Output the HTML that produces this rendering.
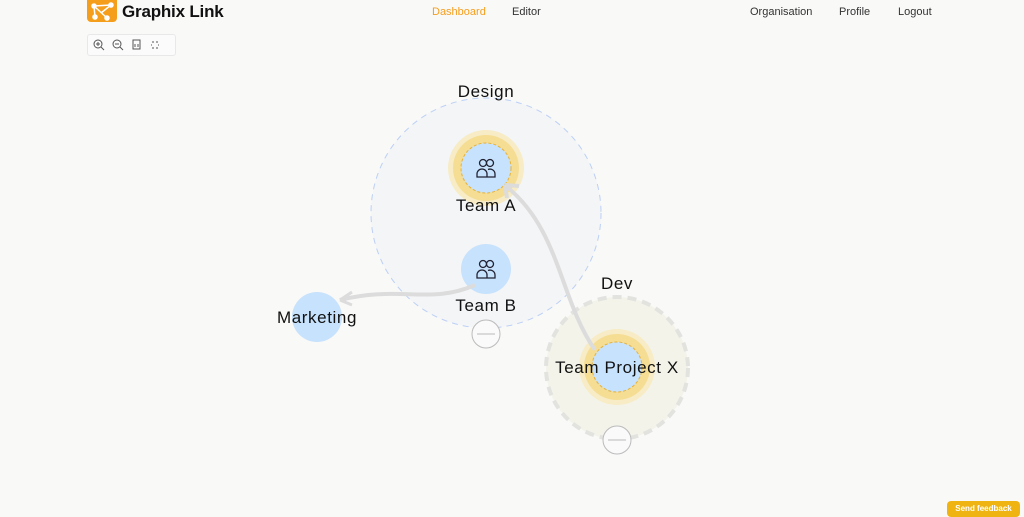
<!DOCTYPE html>
<html><head><meta charset="utf-8"><style>
body{margin:0;width:1024px;height:512px;background:#f9f9f8;font-family:"Liberation Sans",sans-serif;overflow:hidden;position:relative}
.nav{position:absolute;top:5px;font-size:11px;color:#333}
</style></head><body>
<div style="position:absolute;left:87px;top:0;width:30px;height:22px;background:#f59e1b;border-radius:0 0 4px 4px"></div>
<svg style="position:absolute;left:87px;top:0" width="30" height="22"><g stroke="#fff" stroke-width="1.5" fill="#fff"><line x1="7" y1="6" x2="24" y2="5"/><line x1="7" y1="6" x2="20" y2="18"/><line x1="7" y1="6" x2="8" y2="17"/><line x1="24" y1="5" x2="14" y2="13"/><circle cx="7" cy="6" r="2"/><circle cx="24" cy="5" r="2"/><circle cx="20" cy="18" r="2"/><circle cx="8" cy="17" r="2"/></g></svg>
<div style="position:absolute;left:122px;top:2px;font-size:17px;font-weight:bold;color:#111;letter-spacing:-0.2px">Graphix Link</div>
<div class="nav" style="left:432px;top:6px;color:#f59e1b">Dashboard</div>
<div class="nav" style="left:512px;top:6px">Editor</div>
<div class="nav" style="left:750px;top:6px">Organisation</div>
<div class="nav" style="left:839px;top:6px">Profile</div>
<div class="nav" style="left:898px;top:6px">Logout</div>
<div style="position:absolute;left:87px;top:34px;width:87px;height:20px;border:1px solid #e8e8e8;border-radius:3px;background:#fbfbfb"></div>
<svg style="position:absolute;left:87px;top:34px" width="90" height="22" fill="none" stroke="#555" stroke-width="1"><circle cx="11" cy="10" r="4"/><line x1="14" y1="13" x2="17" y2="16"/><line x1="9" y1="10" x2="13" y2="10"/><line x1="11" y1="8" x2="11" y2="12"/><circle cx="30" cy="10" r="4"/><line x1="33" y1="13" x2="36" y2="16"/><line x1="28" y1="10" x2="32" y2="10"/><rect x="46" y="6" width="7" height="9"/><line x1="48" y1="10" x2="48" y2="13"/><line x1="51" y1="10" x2="51" y2="13"/><path d="M66 7v2M70 7v2M66 13v2M70 13v2M64 11h1M71 11h1"/></svg>
<svg style="position:absolute;left:0;top:0" width="1024" height="512">
<circle cx="486" cy="213" r="115" fill="#f4f5f7" stroke="#bcd0f5" stroke-dasharray="6 5"/>
<circle cx="617" cy="368" r="71" fill="#f3f3ea" stroke="#e2e2df" stroke-width="4" stroke-dasharray="9 6"/>
<circle cx="486" cy="168" r="38" fill="#f7ecc6"/><circle cx="486" cy="168" r="33" fill="#f5dd94"/>
<circle cx="486" cy="168" r="25" fill="#c7e2fc" stroke="#e6b23a" stroke-dasharray="3 2"/>
<circle cx="617" cy="367" r="38" fill="#f7ecc6"/><circle cx="617" cy="367" r="33" fill="#f5dd94"/>
<circle cx="617" cy="367" r="25" fill="#c7e2fc" stroke="#e6b23a" stroke-dasharray="3 2"/>
<path d="M595 350 C560 300 560 230 507 187" stroke="#dcdcdc" stroke-width="4" fill="none"/>
<path d="M505 185 l14 1 M505 185 l2 13" stroke="#dcdcdc" stroke-width="4" fill="none"/>
<circle cx="486" cy="269" r="25" fill="#c7e2fc"/>
<circle cx="317" cy="317" r="25" fill="#c7e2fc"/>
<path d="M475 285 C430 305 400 285 340 300" stroke="#dcdcdc" stroke-width="4" fill="none"/>
<path d="M340 300 l12 -8 M340 300 l12 5" stroke="#dcdcdc" stroke-width="3" fill="none"/>
<g fill="none" stroke="#223" stroke-width="1.3"><circle cx="483" cy="163" r="3.5"/><circle cx="490" cy="163" r="3.5"/><path d="M477 177v-3a5 5 0 0 1 10 0v3zM487 177h8v-3a5 5 0 0 0-7-4.5"/>
<circle cx="483" cy="264" r="3.5"/><circle cx="490" cy="264" r="3.5"/><path d="M477 278v-3a5 5 0 0 1 10 0v3zM487 278h8v-3a5 5 0 0 0-7-4.5"/></g>
<circle cx="486" cy="334" r="14" fill="#fafafa" stroke="#bbb"/><line x1="477" y1="334" x2="495" y2="334" stroke="#bbb"/>
<circle cx="617" cy="440" r="14" fill="#fafafa" stroke="#bbb"/><line x1="608" y1="440" x2="626" y2="440" stroke="#bbb"/>
<g font-family="Liberation Sans,sans-serif" font-size="17" fill="#111" text-anchor="middle" letter-spacing="0.6">
<text x="486" y="97">Design</text><text x="486" y="211">Team A</text><text x="486" y="311">Team B</text>
<text x="317" y="323">Marketing</text><text x="617" y="289">Dev</text><text x="617" y="373">Team Project X</text></g>
</svg>
<div style="position:absolute;left:947px;top:501px;width:73px;height:16px;background:#f0b412;border-radius:4px;color:#fff;font-size:8px;font-weight:bold;text-align:center;line-height:16px">Send feedback</div>
</body></html>
